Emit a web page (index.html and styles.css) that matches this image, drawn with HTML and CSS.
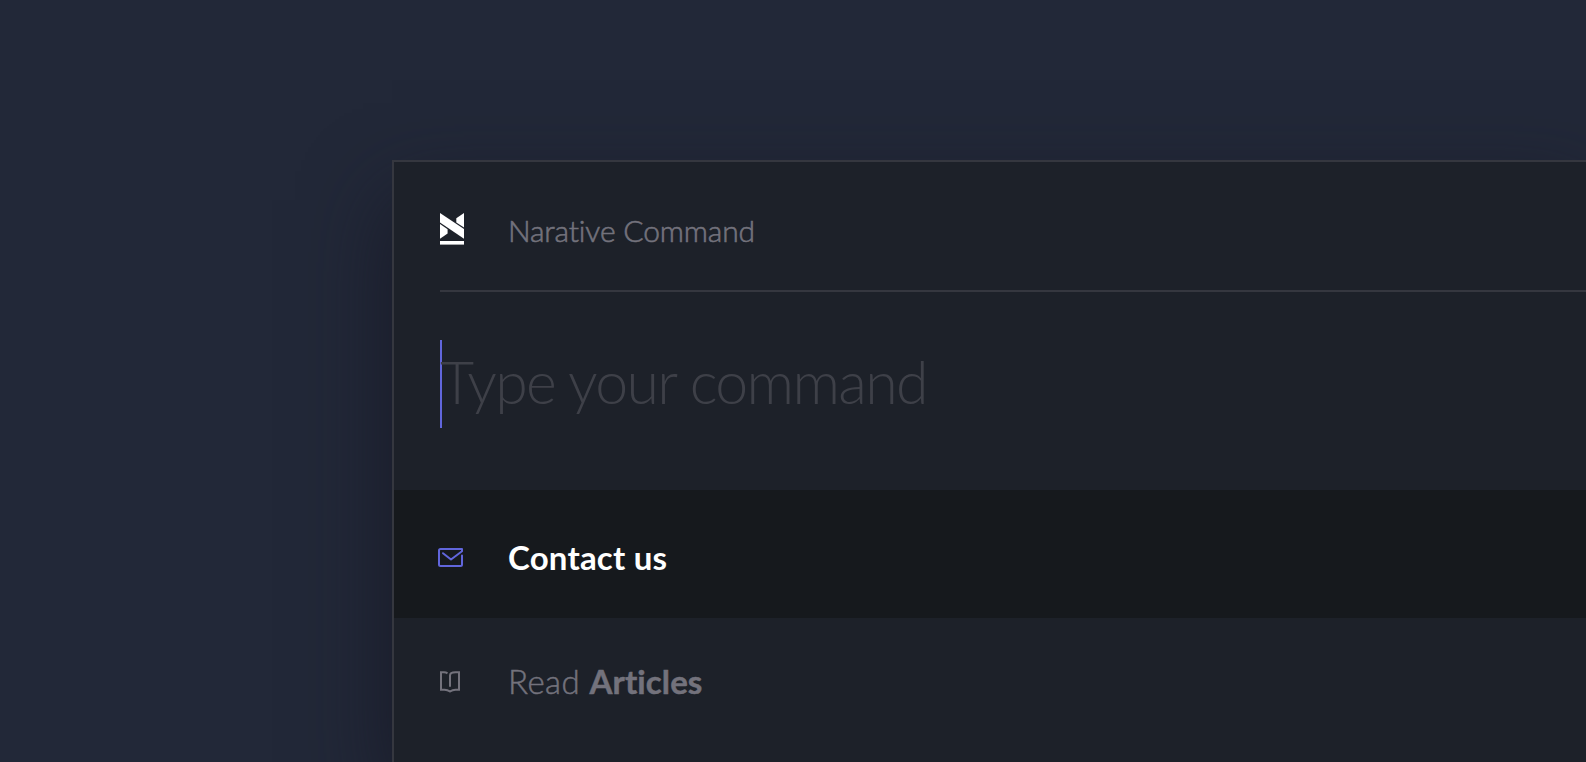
FILE: index.html
```html
<!DOCTYPE html>
<html lang="en">
<head>
<meta charset="utf-8">
<title>Narative Command</title>
<link rel="stylesheet" href="styles.css">
</head>
<body>
<main class="palette">
  <header class="palette-header">
    <svg class="logo" width="24" height="32" viewBox="0 0 24 32" fill="#fff">
      <path d="M0 0 24 16V25.7L0 9.5Z"/>
      <path d="M24 0V14.6L16.3 9.4V5.2Z"/>
      <path d="M0 11 7.6 16.2V20.5L0 25.7Z"/>
      <path d="M0 28H24V31.6H0Z"/>
    </svg>
    <span class="title">Narative Command</span>
  </header>
  <div class="prompt">
    <span class="caret"></span>
    <span class="placeholder">Type your command</span>
  </div>
  <ul class="results">
    <li class="result result-active">
      <span class="icon">
        <svg class="icon-mail" width="26" height="20" viewBox="0 0 26 20" fill="none" stroke="#6166dc" stroke-width="2" stroke-linejoin="round" stroke-linecap="round">
          <path d="M24 7.5V16.5Q24 18 22.5 18H2.500Q1 18 1 16.500V2.500Q1 1 2.500 1H24V3.200L13 11.500L5 5.200"/>
        </svg>
      </span>
      <span class="label label-strong">Contact us</span>
    </li>
    <li class="result">
      <span class="icon">
        <svg class="icon-book" width="20" height="22" viewBox="0 0 20 22" fill="none" stroke="#73727c" stroke-width="2">
          <path d="M7.5 2.3Q6 1.3 4 1.3H1V18.7H4.5Q7.5 18.7 10 20.5Q12.500 18.7 15.500 18.7H19V1.300H15.500Q10 1.300 10 4.500V15.700"/>
        </svg>
      </span>
      <span class="label">Read <b class="label-bold">Articles</b></span>
    </li>
  </ul>
</main>
</body>
</html>
```
FILE: styles.css
```css
* {
  box-sizing: border-box;
}

body {
  margin: 0;
  height: 762px;
  padding: 160px 0 0 392px;
  overflow: hidden;
  background: #222838;
  font-family: Lato, "Liberation Sans", sans-serif;
  white-space: nowrap;
}

.palette {
  height: 602px;
  border: solid #35373f;
  border-width: 2px 0 0 2px;
  background: #1d2129;
  box-shadow: 0 40px 80px rgba(22, 24, 36, 0.85);
}

.palette-header {
  display: flex;
  align-items: flex-start;
  height: 130px;
  margin-left: 46px;
  padding-top: 51px;
  border-bottom: 2px solid #35373f;
}

.logo {
  display: block;
  flex: none;
  margin-right: 44px;
}

.title {
  margin-top: -1px;
  font-size: 30px;
  line-height: 36px;
  font-weight: 300;
  letter-spacing: -0.15px;
  -webkit-text-stroke: 0.6px #73727c;
  color: #73727c;
}

.prompt {
  display: flex;
  height: 198px;
  margin-left: 46px;
  padding-top: 48px;
}

.caret {
  flex: none;
  width: 2px;
  height: 88px;
  background: #6166dc;
}

.placeholder {
  margin-top: -2px;
  margin-left: -2px;
  font-size: 59px;
  line-height: 88px;
  font-weight: 300;
  letter-spacing: -1.65px;
  color: #3e4048;
}

.results {
  margin: 0;
  padding: 0;
  list-style: none;
}

.result {
  display: flex;
  align-items: center;
  height: 128px;
  padding: 0 0 3px 46px;
}

.result:last-child {
  height: 144px;
  padding-bottom: 19px;
}

.result-active {
  padding: 6px 0 0 46px;
  background: #16191d;
}

.icon {
  display: flex;
  flex: none;
  width: 68px;
}

.icon-mail {
  margin: 2px 0 0 -2px;
}

.icon-book {
  margin-top: 3px;
}

.label {
  font-size: 33px;
  line-height: 40px;
  font-weight: 300;
  letter-spacing: 0.45px;
  -webkit-text-stroke: 0.5px #73727c;
  color: #73727c;
}

.label-strong {
  font-weight: 700;
  letter-spacing: 0.2px;
  -webkit-text-stroke: 0;
  color: #fff;
}

.label-bold {
  font-weight: 700;
  letter-spacing: 0.1px;
}
```
